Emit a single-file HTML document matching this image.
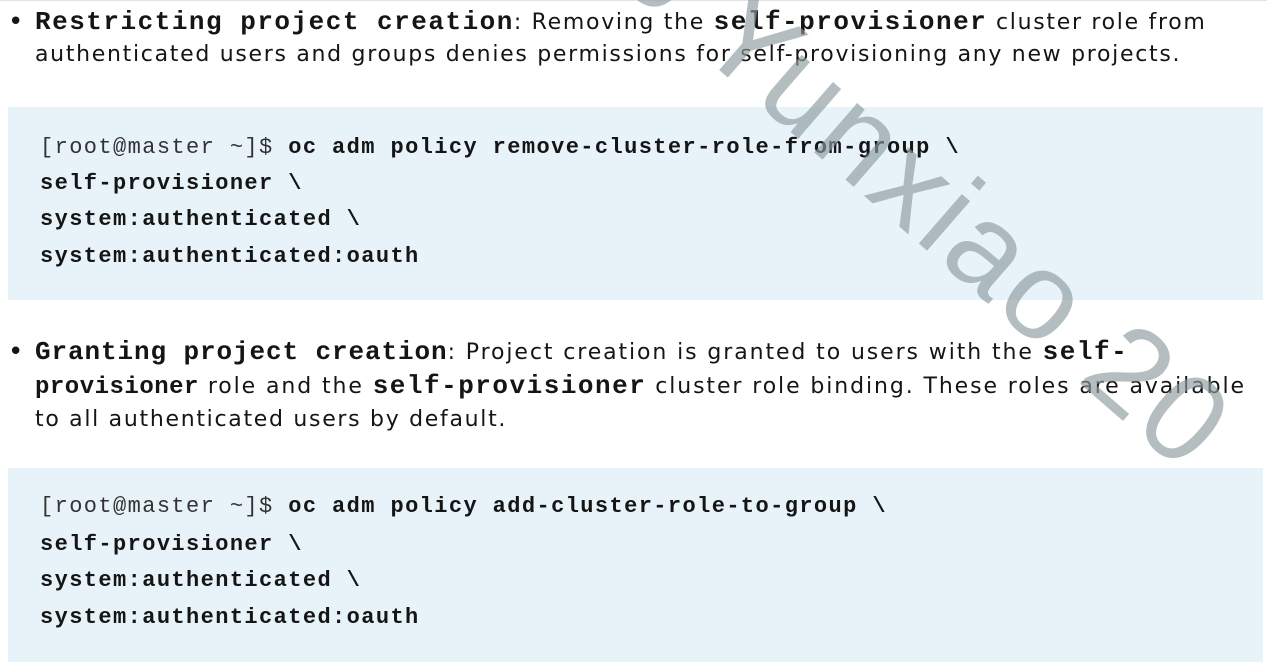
<!DOCTYPE html>
<html><head><meta charset="utf-8"><style>
body{margin:0;width:1267px;height:664px;background:#fff;position:relative;overflow:hidden;font-family:"DejaVu Sans","Liberation Sans",sans-serif;color:#151515}
.p{position:absolute;left:35px;font-size:22px;line-height:32px;letter-spacing:1.7px;white-space:nowrap}
.b{position:absolute;left:8px;font-size:26px;line-height:32px}
.h{font-family:"Liberation Mono",monospace;font-weight:bold;font-size:26px;letter-spacing:1.5px}
.m{font-family:"Liberation Mono",monospace;font-weight:bold;font-size:24px;letter-spacing:0.5px}
.code{position:absolute;left:8px;width:1255px;background:#e7f3f9;}
.cl{position:absolute;left:40px;font-family:"Liberation Mono",monospace;font-size:22px;letter-spacing:1.4px;font-weight:bold;color:#151515;white-space:pre}
.n{font-weight:normal;color:#333}
</style></head><body>
<div style="position:absolute;left:0;top:0;width:1267px;height:1px;background:#e4e4e4"></div>
<div class="b" style="top:6px">•</div>
<div class="p" style="top:6px"><span class="h">Restricting project creation</span>: Removing the <span class="h">self-provisioner</span> cluster role from<br>authenticated users and groups denies permissions for self-provisioning any new projects.</div>
<div class="code" style="top:107px;height:193px"></div>
<div class="cl" style="top:135px"><span class="n">[root@master ~]$ </span>oc adm policy remove-cluster-role-from-group \</div>
<div class="cl" style="top:171px">self-provisioner \</div>
<div class="cl" style="top:207px">system:authenticated \</div>
<div class="cl" style="top:244px">system:authenticated:oauth</div>
<div class="b" style="top:336px">•</div>
<div class="p" style="top:336px;line-height:32.5px;letter-spacing:1.9px"><span class="h" style="letter-spacing:0.9px">Granting project creation</span>: Project creation is granted to users with the <span class="h">self-</span><br><span class="m">provisioner</span> role and the <span class="h">self-provisioner</span> cluster role binding. These roles are available<br><span style="letter-spacing:1.7px">to all authenticated users by default.</span></div>
<div class="code" style="top:468px;height:194px"></div>
<div class="cl" style="top:494px"><span class="n">[root@master ~]$ </span>oc adm policy add-cluster-role-to-group \</div>
<div class="cl" style="top:532px">self-provisioner \</div>
<div class="cl" style="top:568px">system:authenticated \</div>
<div class="cl" style="top:605px">system:authenticated:oauth</div>
<svg style="position:absolute;left:0;top:0" width="1267" height="664"><text x="0" y="0" transform="translate(610,-25) rotate(41)" font-family="Liberation Sans,sans-serif" font-size="124" fill="#8c9a9e" fill-opacity="0.65" letter-spacing="4">o Yunxiao 20</text></svg>
</body></html>
